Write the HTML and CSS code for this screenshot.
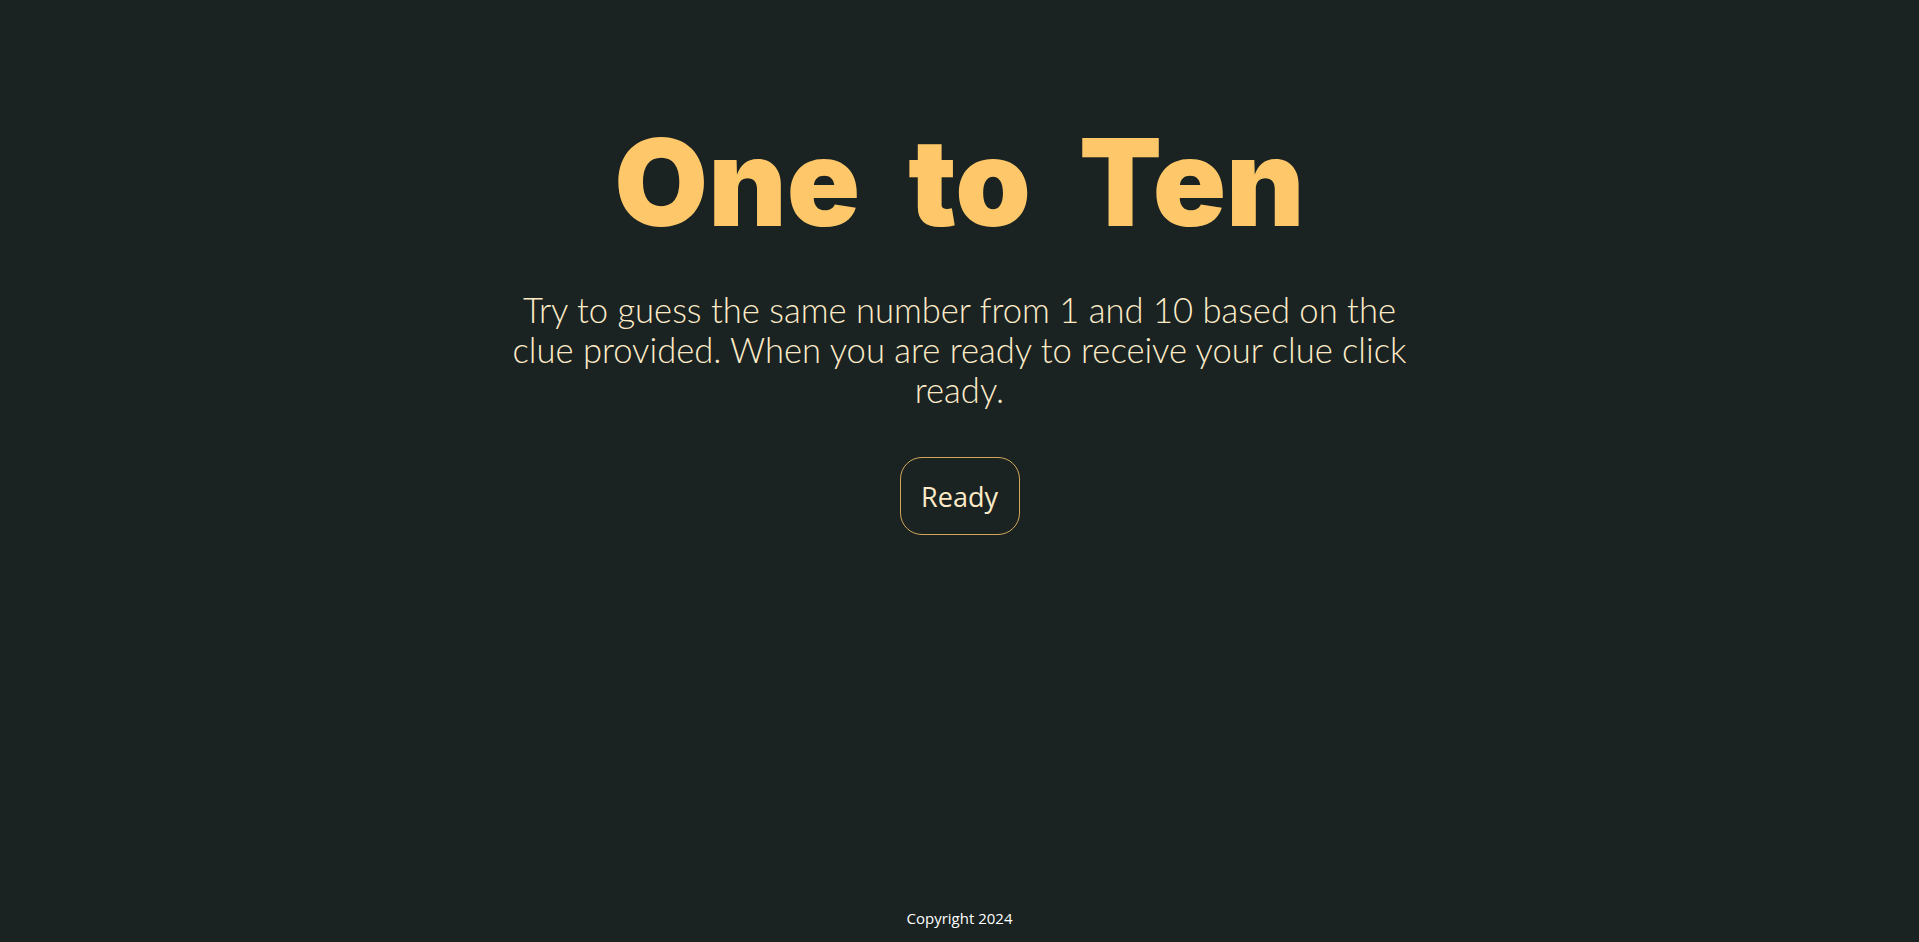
FILE: index.html
```html
<!DOCTYPE html>
<html lang="en">
<head>
<meta charset="utf-8">
<title>One to Ten</title>
<link rel="stylesheet" href="styles.css">
</head>
<body>
<main class="game">
  <h1 class="title">One to Ten</h1>
  <p class="intro">Try to guess the same number from 1 and 10 based on the clue provided. When you are ready to receive your clue click ready.</p>
  <button class="ready-btn" type="button">Ready</button>
</main>
<footer class="footer">Copyright 2024</footer>
</body>
</html>
```
FILE: styles.css
```css
html, body {
  margin: 0;
  padding: 0;
}
body {
  background: #1a2322;
  min-height: 100vh;
  display: flex;
  flex-direction: column;
  font-family: "Lato", "Open Sans", sans-serif;
}
.game {
  flex: 1;
  display: flex;
  flex-direction: column;
  align-items: center;
  padding-top: 122px;
}
.title {
  margin: 0;
  font-family: "Inter", "DejaVu Sans", sans-serif;
  font-weight: 900;
  font-size: 121px;
  line-height: 1;
  word-spacing: 24px;
  color: #fec86a;
}
.intro {
  margin: 47px 0 0;
  width: 920px;
  text-align: center;
  font-family: "Lato", sans-serif;
  font-weight: 300;
  font-size: 34.6px;
  line-height: 40px;
  color: #fdebc8;
}
.ready-btn {
  margin-top: 47px;
  width: 120px;
  height: 78px;
  background: transparent;
  border: 1px solid #d1a85a;
  border-radius: 22px;
  color: #fdebc8;
  font-family: "Open Sans", sans-serif;
  font-size: 27px;
  cursor: pointer;
}
.footer {
  text-align: center;
  color: #ffffff;
  font-family: "Open Sans", sans-serif;
  font-size: 15px;
  padding-bottom: 14px;
}
```
